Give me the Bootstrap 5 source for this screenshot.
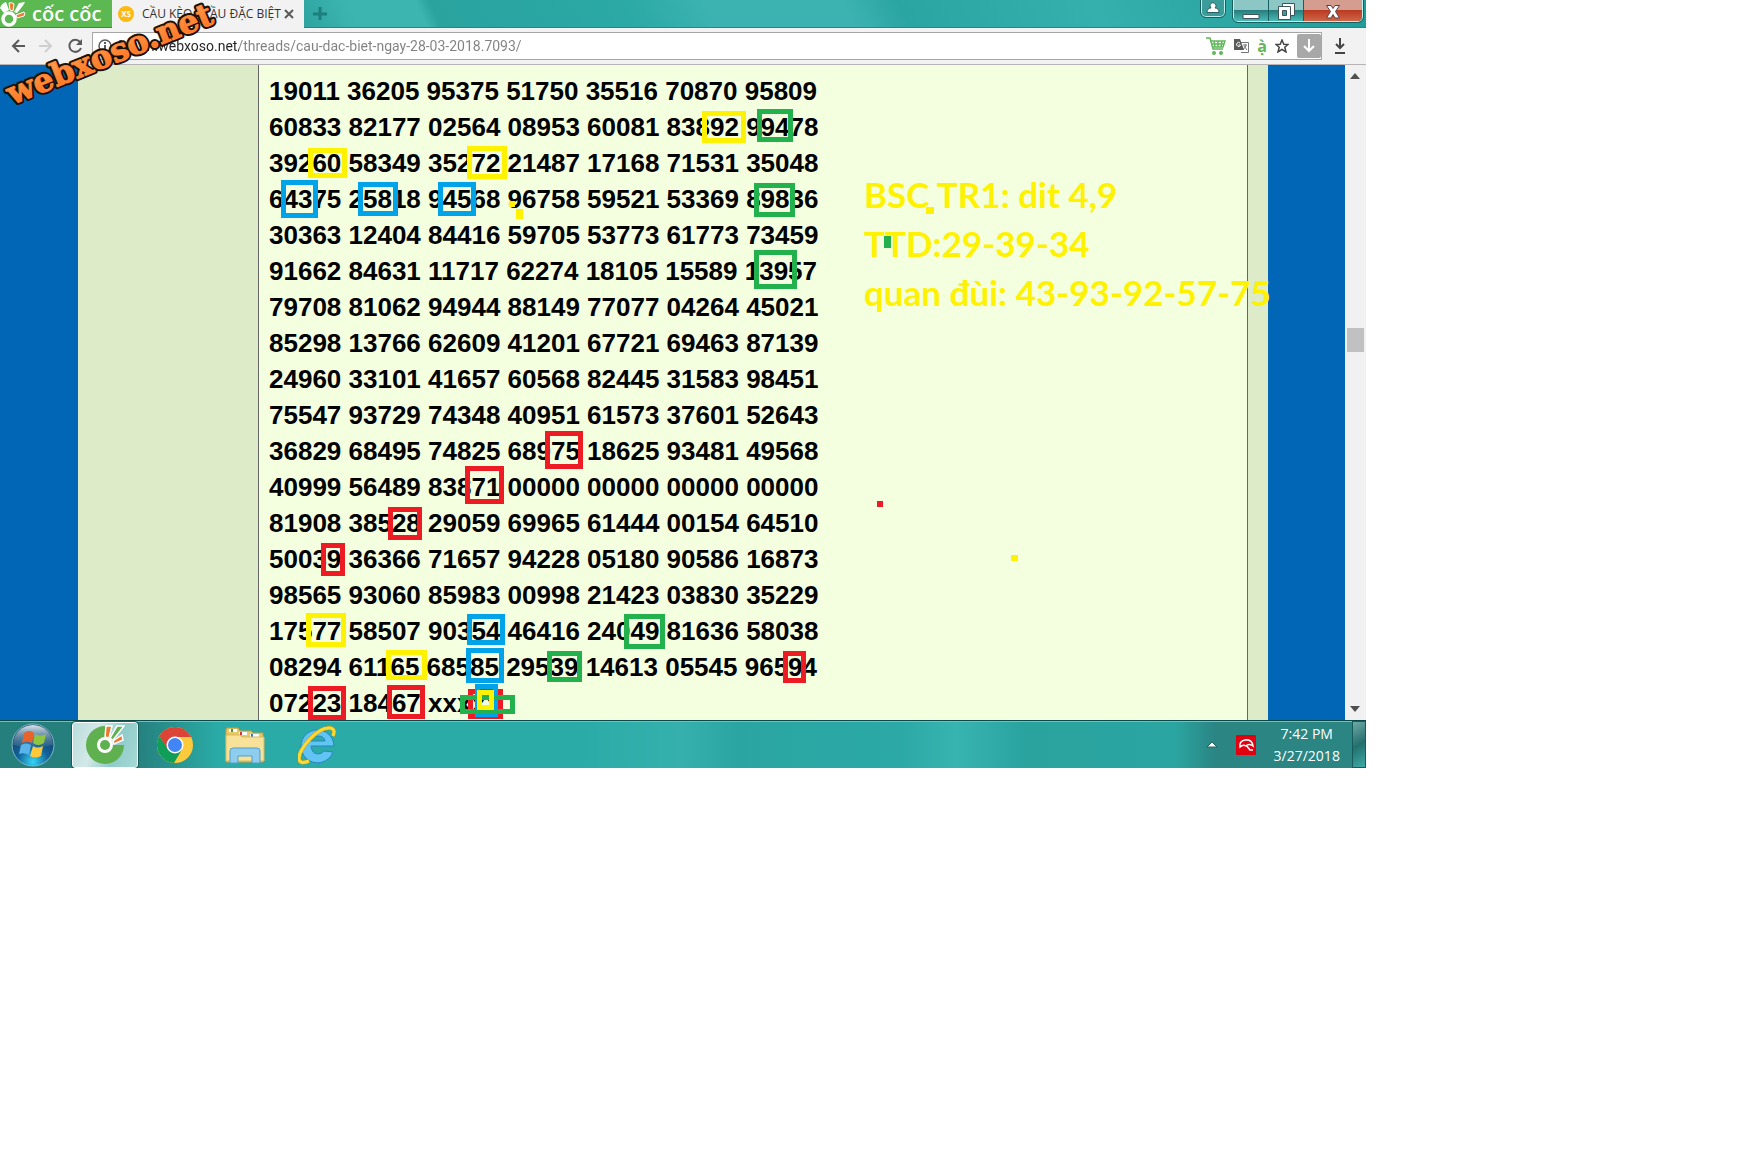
<!DOCTYPE html>
<html lang="vi">
<head>
  <meta charset="UTF-8" />
  <meta name="viewport" content="width=device-width, initial-scale=1" />
  <title>CẦU KÈO - CẦU ĐẶC BIỆT</title>
  <link href="https://cdn.jsdelivr.net/npm/bootstrap@5.3.0/dist/css/bootstrap.min.css" rel="stylesheet" />
  <style>
    body {
      background: #fff;
      color: #000;
      font-family: "Open Sans", sans-serif;
    }
    .screen {
      width: 78.5vw;
    }
    button {
      border: 0;
      padding: 0;
      background: none;
    }
    svg {
      display: block;
      flex-shrink: 0;
    }

    /* Tab strip */
    .tab-strip {
      height: 28px;
      background: linear-gradient(65deg, #2ea39f 0 22%, #3cb5b1 26% 31%, #2aa39f 32%, #2ba9a5 46%, #3cb3b0 52% 62%, #2ba5a2 66%, #36b0ad 80%, #1f9c99);
      border-bottom: 1px solid #1e8a88;
    }
    .coccoc {
      width: 112px;
      background: #5cb951;
      color: #fff;
      font: 600 20px/28px "Open Sans", sans-serif;
      white-space: nowrap;
    }
    .page-tab {
      width: 192px;
      height: 28px;
      background: #f2f2f2;
      font-size: 12px;
    }
    .page-tab > svg {
      margin-left: 6px;
    }
    .tab-title {
      width: 138px;
      white-space: nowrap;
      color: #333;
    }
    .user-btn, .win-btns {
      border: 1px solid #bfeeee;
      border-top: 0;
      border-radius: 0 0 5px 5px;
      outline: 1px solid #17605f;
      overflow: hidden;
    }
    .user-btn {
      width: 24px;
      height: 17px;
      background: #3c9c9a;
    }
    .win-btns {
      height: 22px;
      margin-right: 3px;
    }
    .win-btns button {
      width: 35px;
      height: 22px;
      background: linear-gradient(#8cc6c5 45%, #267c7a 46%, #4cc0bd);
      border-right: 1px solid #17605f;
    }
    .win-btns .close-btn {
      width: 58px;
      border: 0;
      background: linear-gradient(#d59d8f 45%, #ba3a20 46%, #d0694c);
    }

    /* Toolbar */
    .tool-bar {
      height: 37px;
      background: #f2f2f2;
      border-bottom: 1px solid #b6b4b6;
    }
    .nav-btns {
      gap: 14px;
      padding: 0 9px 0 11px;
    }
    .address {
      height: 28px;
      border: 1px solid #a6a6a6;
      background: #fff;
    }
    .address input {
      border: 0;
      outline: 0;
      font: 14px/20px Roboto, sans-serif;
      color: transparent;
      background: linear-gradient(90deg, #222 126px, #808080 126px);
      -webkit-background-clip: text;
      background-clip: text;
    }
    .save-btn {
      width: 24px;
      height: 24px;
      border-radius: 2px;
      background: #a8a8a8;
    }
    .viet {
      color: #5fb75a;
      font: 700 16px/20px "Open Sans", sans-serif;
    }
    .down-btn {
      padding: 0 20px 0 12px;
    }

    /* Page */
    .view {
      height: 655px;
      background: #0066b5;
    }
    .forum {
      margin: 0 77px 0 78px;
      background: #ddebc8;
      padding: 0 20px 0 180px;
    }
    .post {
      background: #f3ffdf;
      border: solid #666;
      border-width: 0 1px;
      padding: 8px 10px 0;
    }
    .post p {
      font: 700 26px/36px "Liberation Sans", sans-serif;
      white-space: nowrap;
    }
    .scroller {
      width: 21px;
      background: #f1f1f1;
    }
    .thumb {
      width: 17px;
      height: 24px;
      margin-top: 249px;
      background: #c1c1c1;
    }

    /* Pen marks drawn over the page */
    .pen {
      position: absolute;
      left: 0;
      top: 0;
    }
    .note {
      position: absolute;
      left: 864px;
      top: 170px;
      color: #fff200;
      font: 700 35px/49px Lato, sans-serif;
      white-space: nowrap;
    }
    .watermark {
      position: absolute;
      left: 0;
      top: 0;
      pointer-events: none;
    }

    /* Taskbar */
    .task-bar {
      height: 48px;
      border-top: 1px solid #0b4a4a;
      background: linear-gradient(90deg, #25807d 0, #25807d 10%, #2aaba7 16%, #2aaba7 42%, #35b0ad 50%, #2aa5a2 54%, #2ba9a6 66%, #38b4b0 70%, #2aa39f 75%, #2ba5a1 86%, #2a8583 89%, #2a8583);
      box-shadow: inset 0 1px #62c7c4;
    }
    .start-btn {
      padding: 0 17px 0 11px;
    }
    .task-on {
      width: 66px;
      height: 46px;
      border: 1px solid #fff;
      border-radius: 3px;
      outline: 1px solid #165b5a;
      background: linear-gradient(110deg, #b9dcdb 0, #d3e9e8 35%, #8fcbc9 65%, #a5d9d7);
    }
    .tray {
      gap: 18px;
    }
    .clock {
      color: #fff;
      font-size: 14px;
      line-height: 22px;
    }
    .desk-btn {
      width: 14px;
      background: linear-gradient(150deg, #6fa9a7, #246f6d 50%, #3caaa6);
      border: 1px solid #8fcfcd;
      outline: 1px solid #155c5b;
      outline-offset: -1px;
    }
  </style>
</head>
<body>

  <div class="screen position-relative">

    <!-- Tab strip -->
    <header class="tab-strip d-flex align-items-start">
      <button class="coccoc d-flex align-items-center h-100">
        <svg width="32" height="28" viewBox="0 0 32 28">
          <circle cx="9" cy="19" r="6" fill="none" stroke="#fff" stroke-width="3.500" />
          <path d="M0 8Q2 3 6 2L9 10 4 13Z" fill="#fff" />
          <path d="M10 10 L9 3 Q12 2 14 4 L13 11Z" fill="#f37a35" stroke="#fff" />
          <path d="M14 12 L19 3 L25 2 Q24 5 17 13Z" fill="#fff" />
          <path d="M16 15 L24 12 Q26 14 24 16 L17 18Z" fill="#f37a35" stroke="#fff" />
        </svg>
        <span>cốc cốc</span>
      </button>
      <div class="page-tab d-flex align-items-center">
        <svg width="16" height="16" viewBox="0 0 16 16">
          <circle cx="8" cy="8" r="8" fill="#fcb813" />
          <text x="8" y="11" text-anchor="middle" font-size="8" font-weight="700" fill="#fff">XS</text>
        </svg>
        <span class="tab-title ms-1 ps-1">CẦU KÈO - CẦU ĐẶC BIỆT</span>
        <button class="ms-2" aria-label="Đóng tab">
          <svg width="10" height="10" viewBox="0 0 10 10"><path d="M1 1 9 9M9 1 1 9" stroke="#5a5a5a" stroke-width="2" /></svg>
        </button>
      </div>
      <button class="align-self-center ms-2" aria-label="Tab mới">
        <svg width="16" height="16" viewBox="0 0 16 16"><path d="M8 1V14M1 8H15" stroke="#1b7f7d" stroke-width="3" /></svg>
      </button>
      <button class="user-btn ms-auto d-flex justify-content-center" aria-label="Người dùng">
        <svg width="14" height="15" viewBox="0 0 14 15"><path d="M4 6a3 3 0 1 1 5 2q4 0 4 4.500H1Q1 8 5 8Z" fill="#fff" stroke="#2b5f62" /></svg>
      </button>
      <div class="win-btns d-flex ms-2">
        <button aria-label="Thu nhỏ">
          <svg class="mx-auto" width="18" height="20" viewBox="0 0 18 20"><path d="M1 13.500H17V17.500H1Z" fill="#fff" stroke="#3d555a" /></svg>
        </button>
        <button aria-label="Khôi phục">
          <svg class="mx-auto" width="20" height="20" viewBox="0 0 20 20">
            <path d="M6.500 2.500H18.500V14.500H6.500Z" fill="#fff" stroke="#3d555a" />
            <path d="M2.500 5.500H14.500V18.500H2.500Z" fill="#fff" stroke="#3d555a" />
            <path d="M6.500 9.500H10.500V14.500H6.500Z" fill="#3f9b99" stroke="#3d555a" />
          </svg>
        </button>
        <button class="close-btn" aria-label="Đóng">
          <svg class="mx-auto" width="18" height="20" viewBox="0 0 18 20"><path d="M2.500 4.500H7L9 7.500 11 4.500H15.500L11.500 10.500 15.500 17H11L9 13.500 7 17H2.500L6.500 10.500Z" fill="#fff" stroke="#5b3f48" /></svg>
        </button>
      </div>
    </header>

    <!-- Toolbar -->
    <nav class="tool-bar d-flex align-items-center">
      <div class="nav-btns d-flex">
        <button aria-label="Quay lại">
          <svg width="14" height="16" viewBox="0 0 14 16"><path d="M14 8H2M8 2 2 8 8 14" fill="none" stroke="#5a5a5a" stroke-width="2" /></svg>
        </button>
        <button aria-label="Tiếp">
          <svg width="14" height="16" viewBox="0 0 14 16"><path d="M0 8H12M6 2 12 8 6 14" fill="none" stroke="#cfcfcf" stroke-width="2" /></svg>
        </button>
        <button aria-label="Tải lại">
          <svg width="16" height="16" viewBox="0 0 16 16"><path d="M13 4A6 6 0 1 0 14 10" fill="none" stroke="#5a5a5a" stroke-width="2" /><path d="M15 1V7H9Z" fill="#5a5a5a" /></svg>
        </button>
      </div>
      <div class="address d-flex align-items-center flex-fill">
        <svg class="ms-1" width="16" height="16" viewBox="0 0 16 16"><circle cx="8" cy="8" r="6" fill="none" stroke="#5a5a5a" stroke-width="1.500" /><path d="M8 7V12M8 4V6" stroke="#5a5a5a" stroke-width="2" /></svg>
        <input class="flex-fill px-1" type="text" aria-label="Địa chỉ" value="forum.webxoso.net/threads/cau-dac-biet-ngay-28-03-2018.7093/" />
        <div class="d-flex align-items-center gap-2">
          <svg width="20" height="18" viewBox="0 0 20 18">
            <path d="M0 1H4L7 12H17M4 4H19L17 10H6M8 4 9 10M12 4V10M16 4 15 10M5 7H18" fill="none" stroke="#5fb75a" stroke-width="1.500" />
            <circle cx="8" cy="16" r="2" fill="#5fb75a" /><circle cx="15" cy="16" r="2" fill="#5fb75a" />
          </svg>
          <svg width="15" height="14" viewBox="0 0 15 14">
            <path d="M6 3.500H14.500V13.500H7" fill="#fff" stroke="#777" />
            <path d="M0 0H6L10 11H0Z" fill="#5a5a5a" />
            <path d="M6 4A2 2 0 1 0 6.500 6H4.500" fill="none" stroke="#fff" />
            <path d="M9 6H13M11 5V6M12 6Q12 9 9 10M10 7 13 11" fill="none" stroke="#777" />
          </svg>
          <span class="viet">ạ̀</span>
          <svg width="14" height="14" viewBox="0 0 14 14"><path d="M7 1 8.800 5.200 13 5.500 9.800 8.300 11 13 7 10.400 3 13 4.200 8.300 1 5.500 5.200 5.200Z" fill="none" stroke="#444" stroke-width="1.500" /></svg>
          <button class="save-btn" aria-label="Tải trang">
            <svg class="mx-auto" width="12" height="14" viewBox="0 0 12 14"><path d="M6 0V12M1 7 6 12 11 7" fill="none" stroke="#fff" stroke-width="2" /></svg>
          </button>
        </div>
      </div>
      <button class="down-btn" aria-label="Tải xuống">
        <svg width="12" height="16" viewBox="0 0 12 16"><path d="M6 0V10M2 6 6 10 10 6M1 15H11" fill="none" stroke="#444" stroke-width="2" /></svg>
      </button>
    </nav>

    <!-- Page -->
    <main class="view d-flex">
      <div class="forum flex-fill">
        <article class="post h-100">
          <p class="m-0">
            19011 36205 95375 51750 35516 70870 95809<br />
            60833 82177 02564 08953 60081 83892 99478<br />
            39260 58349 35272 21487 17168 71531 35048<br />
            64375 25818 94568 96758 59521 53369 89836<br />
            30363 12404 84416 59705 53773 61773 73459<br />
            91662 84631 11717 62274 18105 15589 13957<br />
            79708 81062 94944 88149 77077 04264 45021<br />
            85298 13766 62609 41201 67721 69463 87139<br />
            24960 33101 41657 60568 82445 31583 98451<br />
            75547 93729 74348 40951 61573 37601 52643<br />
            36829 68495 74825 68975 18625 93481 49568<br />
            40999 56489 83871 00000 00000 00000 00000<br />
            81908 38528 29059 69965 61444 00154 64510<br />
            50039 36366 71657 94228 05180 90586 16873<br />
            98565 93060 85983 00998 21423 03830 35229<br />
            17577 58507 90354 46416 24049 81636 58038<br />
            08294 61165 68585 29539 14613 05545 96594<br />
            07223 18467 xxxxx
          </p>
        </article>
      </div>
      <div class="scroller d-flex flex-column align-items-center justify-content-between py-2">
        <svg width="10" height="6" viewBox="0 0 10 6"><path d="M0 6 5 0 10 6Z" fill="#505050" /></svg>
        <div class="thumb mb-auto"></div>
        <svg width="10" height="6" viewBox="0 0 10 6"><path d="M0 0H10L5 6Z" fill="#505050" /></svg>
      </div>
    </main>

    <!-- Taskbar -->
    <footer class="task-bar d-flex align-items-center">
      <button class="start-btn" aria-label="Start">
        <svg width="44" height="44" viewBox="0 0 44 44">
          <defs>
            <radialGradient id="orb" cx=".5" cy=".9" r=".8"><stop offset="0" stop-color="#35d6f7" /><stop offset=".45" stop-color="#12649c" /><stop offset="1" stop-color="#123a5e" /></radialGradient>
            <linearGradient id="shine" x2="0" y2="1"><stop offset="0" stop-color="#dbe6ee" /><stop offset="1" stop-color="#4d7f9f" stop-opacity=".3" /></linearGradient>
          </defs>
          <circle cx="22" cy="22" r="21" fill="url(#orb)" stroke="#7fb6c4" />
          <path d="M2 22A20 20 0 0 1 42 22Q22 26 2 22Z" fill="url(#shine)" />
          <path d="M13 10Q18 6 23 10L21 20Q16 17 11 20Z" fill="#e8622a" />
          <path d="M24 11Q29 14 35 11L33 20Q27 24 22 20Z" fill="#8fc640" />
          <path d="M10 22Q15 19 20 22L18 32Q13 29 8 31Z" fill="#59b3ea" />
          <path d="M22 23Q26 26 32 23L30 33Q24 36 19 33Z" fill="#fdc93a" />
        </svg>
      </button>
      <button class="task-on" aria-label="Cốc Cốc">
        <svg class="mx-auto" width="40" height="40" viewBox="0 0 40 40">
          <path d="M20 1A19 19 0 1 0 39 20H27L20 13Z" fill="#5fb04f" />
          <circle cx="20" cy="20" r="8" fill="#fff" /><circle cx="20" cy="20" r="5" fill="#5fb04f" />
          <path d="M20 12 21 1H27L24 13Z" fill="#f0762c" stroke="#fff" stroke-width="1.500" />
          <path d="M25 13 32 1H39L28 15Z" fill="#5fb04f" stroke="#fff" stroke-width="1.500" />
          <path d="M28 16 37 10 38 15 29 19Z" fill="#f0762c" stroke="#fff" stroke-width="1.500" />
        </svg>
      </button>
      <button class="ms-3" aria-label="Chrome">
        <svg width="42" height="38" viewBox="-2 0 42 38">
          <circle cx="19" cy="19" r="18" fill="#fdca3b" />
          <path d="M3.400 10A18 18 0 0 1 34.600 10L35 11H19L11 23Z" fill="#db4437" />
          <path d="M3.400 10A18 18 0 0 0 18 37L26 23.500 12 23.500Z" fill="#0f9d58" />
          <circle cx="19" cy="19" r="8.500" fill="#fff" /><circle cx="19" cy="19" r="7" fill="#4285f4" />
        </svg>
      </button>
      <button class="ms-4 px-1" aria-label="Explorer">
        <svg width="42" height="40" viewBox="-1 0 42 40">
          <path d="M2 3H13L15 6H26L28 8H38V37H1V5Z" fill="#e9c866" stroke="#c79f45" />
          <path d="M4 4H12V7H4ZM14 7H22V10H14ZM25 9H34V12H25Z" fill="#fff" />
          <path d="M6 4H8V7H6Z" fill="#35a047" /><path d="M15 7H17V10H15Z" fill="#d8342f" /><path d="M26 9H28V12H26Z" fill="#2f7fd0" />
          <path d="M1 10H15L17 12H39V36H1Z" fill="#f8e29a" stroke="#d9b95c" />
          <path d="M5 38V26Q5 23 8 23H32Q35 23 35 26V38H27V31H13V38Z" fill="#8fcdee" stroke="#4f9fcb" />
        </svg>
      </button>
      <button class="ms-4 px-1" aria-label="Internet Explorer">
        <svg width="38" height="40" viewBox="1 0 38 40">
          <path d="M36 27A16.500 16.500 0 1 1 37 21H14Q15 29 21 29 25 29 27 26ZM14 16H28Q27 11 21 11 15 11 14 16Z" fill="#62c4f3" stroke="#2687c2" fill-rule="evenodd" />
          <path d="M36 11Q39 4 33 3 24 2 13 14 2 26 2 33 2 40 12 36" fill="none" stroke="#c99c14" stroke-width="4" />
          <path d="M36 11Q39 4 33 3 24 2 13 14 2 26 2 33 2 40 12 36" fill="none" stroke="#fbd936" stroke-width="3" />
        </svg>
      </button>
      <div class="tray d-flex align-items-center align-self-stretch ms-auto me-1">
        <svg width="12" height="7" viewBox="0 0 12 7"><path d="M1 6 6 1 11 6Z" fill="#fff" stroke="#26605f" /></svg>
        <svg width="20" height="20" viewBox="0 0 20 20">
          <rect width="20" height="20" rx="1" fill="#e1000f" />
          <path d="M4 12Q3 6 9 5 16 4 17 11 13 8 10 11 7 9 4 12ZM10 10 14 15H17" fill="none" stroke="#fff" stroke-width="1.500" />
        </svg>
        <div class="clock text-center">7:42 PM<br />3/27/2018</div>
      </div>
      <button class="desk-btn align-self-stretch ms-2" aria-label="Hiện màn hình nền"></button>
    </footer>

    <div class="note">BSC TR1: dit 4,9<br />TTD:29-39-34<br />quan đùi: 43-93-92-57-75</div>

    <svg class="pen" id="pen" width="1366" height="768" pointer-events="none"></svg>

    <svg class="watermark" width="230" height="120" viewBox="0 0 230 120">
      <defs>
        <linearGradient id="fire" x2="0" y2="1"><stop offset=".2" stop-color="#ff9a4d" /><stop offset="1" stop-color="#ff6a14" /></linearGradient>
      </defs>
      <g transform="translate(12 105) rotate(-22)" font-family="DejaVu Serif, serif" font-weight="700" font-size="32" stroke-linejoin="round">
        <text stroke="#1c1008" stroke-width="5">webxoso.net</text>
        <text fill="url(#fire)" stroke="#ff8534" stroke-width="1">webxoso.net</text>
      </g>
    </svg>
  </div>

  <script src="https://cdn.jsdelivr.net/npm/bootstrap@5.3.0/dist/js/bootstrap.bundle.min.js"></script>
  <script>
    const colors = { r: '#ed1c24', g: '#22b14c', b: '#00a2e8', y: '#fff200' };

    // color, x, y, width, height
    const frames = [
      ['y', 702, 111, 44, 32], ['g', 757, 109, 36, 33],
      ['y', 308, 148, 39, 30], ['y', 467, 146, 40, 33],
      ['b', 281, 180, 37, 38], ['b', 358, 182, 40, 34], ['b', 438, 182, 38, 34],
      ['g', 754, 183, 41, 34], ['g', 754, 250, 43, 39],
      ['r', 545, 431, 38, 38], ['r', 465, 466, 39, 38], ['r', 388, 507, 34, 33], ['r', 321, 543, 24, 33],
      ['y', 306, 613, 40, 34], ['b', 467, 614, 38, 31], ['g', 624, 614, 41, 35],
      ['y', 386, 650, 41, 30], ['b', 466, 648, 38, 35], ['g', 547, 651, 35, 31], ['r', 783, 651, 23, 32],
      ['r', 308, 686, 38, 34], ['r', 387, 685, 38, 34],
      ['r', 468, 689, 35, 30], ['b', 475, 684, 23, 33], ['y', 477, 690, 17, 20], ['g', 460, 695, 55, 19], ['y', 477, 690, 17, 20]
    ];
    const dots = [
      ['y', 509, 201, 6, 6], ['y', 516, 209, 7, 10], ['y', 926, 207, 8, 7],
      ['g', 884, 236, 7, 12], ['r', 877, 501, 6, 6], ['y', 1011, 555, 7, 6]
    ];

    const pen = document.getElementById('pen');
    frames.forEach(([c, x, y, w, h]) => {
      pen.innerHTML += `<path d="M${x} ${y}h${w}v${h}h${-w}z m5 5v${h - 10}h${w - 10}v${10 - h}z" fill="${colors[c]}" />`;
    });
    dots.forEach(([c, x, y, w, h]) => {
      pen.innerHTML += `<rect x="${x}" y="${y}" width="${w}" height="${h}" fill="${colors[c]}" />`;
    });
  </script>
</body>
</html>
